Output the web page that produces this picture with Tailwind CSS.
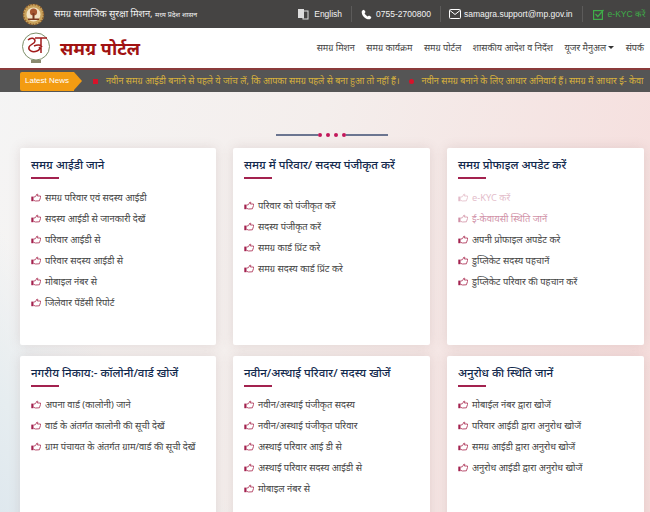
<!DOCTYPE html>
<html lang="hi">
<head>
<meta charset="UTF-8">
<title>समग्र पोर्टल</title>
<script src="https://cdn.jsdelivr.net/npm/@tailwindcss/browser@4"></script>
</head>
<body class="font-['Noto_Sans','Noto_Sans_Devanagari','Lohit_Devanagari','FreeSerif',sans-serif]">

<svg width="0" height="0" class="absolute">
  <symbol id="hand" viewBox="0 0 10 9">
    <rect x="0.300" y="3.600" width="2.200" height="4.600" fill="#a3224f"/>
    <path d="M2.500 4.200 4.500 3.600 6 1l.9.500L6.400 3h3.100v1.500L8.400 7.800 4.500 8 2.500 7.300" fill="none" stroke="#b9506f" stroke-width="1"/>
  </symbol>
</svg>

<div class="h-[512px] w-[650px] overflow-hidden bg-[linear-gradient(50deg,#dfe8ee_0%,#e6edf0_9%,transparent_22%),linear-gradient(105deg,#f5f5f5_0%,#f4eeec_45%,#f6dcdb_100%)]">

<!-- top bar -->
<div class="flex h-[28px] items-center bg-[#454443] pl-[22px] text-[#f2f2f2]">
  <svg width="23" height="23" viewBox="0 0 23 23" class="shrink-0">
    <circle cx="11.500" cy="11.500" r="10.500" fill="#c9a35c"/>
    <circle cx="11.500" cy="11.500" r="10" fill="none" stroke="#8a5a2a" stroke-width="1.500" stroke-dasharray="1.500 1.500"/>
    <circle cx="11.500" cy="11.500" r="7" fill="#f3e3c4"/>
    <circle cx="11.500" cy="9" r="3.600" fill="#a5552f"/>
    <rect x="10.500" y="10" width="2" height="6" fill="#7b3a20"/>
    <rect x="6" y="15.500" width="11" height="1.500" fill="#7b3a20"/>
  </svg>
  <div class="ml-[9px] text-[9.3px]">समग्र सामाजिक सुरक्षा मिशन, <span class="text-[7px]">मध्य प्रदेश शासन</span></div>
  <div class="ml-auto flex items-center font-['Liberation_Sans',sans-serif] text-[8.5px]">
    <div class="flex h-[16px] items-center gap-[5px] border-r border-[#5c5b5a] pr-[9px]">
      <svg width="12" height="12" viewBox="0 0 12 12"><rect x="1" y="1" width="6" height="9" fill="#ddd"/><rect x="6" y="3" width="5" height="8" fill="none" stroke="#ddd"/></svg>
      <span>English</span>
    </div>
    <div class="ml-[9px] flex h-[16px] items-center gap-[4px] border-r border-[#5c5b5a] pr-[9px]">
      <svg width="11" height="11" viewBox="0 0 24 24" fill="#fff"><path d="M6.600 1.500 10 6.500 7.800 9.500c1.300 2.800 3.700 5.200 6.700 6.700l3-2.200 5 3.400c-.4 2.800-2.500 5.100-5 5.100C9.500 22.500 1.500 14.500 1.500 6.500c0-2.500 2.300-4.600 5.100-5z"/></svg>
      <span>0755-2700800</span>
    </div>
    <div class="ml-[8px] flex h-[16px] items-center gap-[3px] border-r border-[#5c5b5a] pr-[9px]">
      <svg width="12" height="10" viewBox="0 0 12 10" fill="none" stroke="#fff"><rect x=".5" y=".5" width="11" height="9" rx="1"/><path d="m1 1.500 5 4 5-4"/></svg>
      <span>samagra.support@mp.gov.in</span>
    </div>
    <div class="ml-[10px] flex items-center gap-[4px] pr-[5px] text-[#3fae49]">
      <svg width="11" height="11" viewBox="0 0 11 11" fill="none" stroke="#3fae49" stroke-width="1.200"><rect x=".6" y="1.600" width="8.800" height="8.800"/><path d="m2.500 5 2.300 2.500L10.500 1"/></svg>
      <span>e-KYC करें</span>
    </div>
  </div>
</div>

<!-- header -->
<div class="flex h-[40px] items-center bg-white pl-[21px]">
  <svg width="30" height="32" viewBox="0 0 30 32" class="shrink-0">
    <circle cx="15" cy="14.500" r="13.500" fill="none" stroke="#7d8f6a"/>
    <path d="M7 8c3-3 7-2 7 1s-5 3-6 6 3 6 8 4c3-1 3-3 2-4M14 6h12M20 6v15M13 14c4-2 7-1 8 1" fill="none" stroke="#a11c1c" stroke-width="1.500"/>
    <rect x="10" y="28" width="10" height="3" fill="#8a8a70"/>
  </svg>
  <div class="ml-[9px] text-[18px] font-bold leading-none text-[#a11212]">समग्र पोर्टल</div>
  <nav class="ml-auto flex items-center gap-[11.5px] pr-[6px] text-[9.1px] text-[#444]">
    <span>समग्र मिशन</span>
    <span>समग्र कार्यक्रम</span>
    <span>समग्र पोर्टल</span>
    <span>शासकीय आदेश व निर्देश</span>
    <span class="flex items-center gap-[2px]">यूजर मैनुअल<span class="h-0 w-0 border-x-[3px] border-t-[3px] border-x-transparent border-t-[#333]"></span></span>
    <span>संपर्क</span>
  </nav>
</div>

<!-- latest news -->
<div class="flex h-[24px] items-center overflow-hidden whitespace-nowrap border-t-2 border-[#8a3a3a] bg-[#555] text-[9.1px] text-[#d9b23c]">
  <div class="relative ml-[20px] flex h-[19px] w-[54px] shrink-0 items-center justify-center rounded-l-[2px] bg-[#f39c12] font-['Liberation_Sans',sans-serif] text-[8px] text-white">
    Latest News
    <span class="absolute left-full top-0 h-0 w-0 border-y-[9.5px] border-l-[8px] border-y-transparent border-l-[#f39c12]"></span>
  </div>
  <span class="ml-[19px] mr-[8px] h-[5px] w-[5px] shrink-0 bg-[#d8122a]"></span>
  <span>नवीन समग्र आईडी बनाने से पहले ये जांच लें, कि आपका समग्र पहले से बना हुआ तो नहीं हैं।</span>
  <span class="ml-[10px] mr-[7px] h-[5px] w-[5px] shrink-0 rounded-full bg-[#d8122a]"></span>
  <span>नवीन समग्र बनाने के लिए आधार अनिवार्य हैं। समग्र में आधार ई- केवा</span>
</div>

<!-- divider -->
<div class="flex h-[56px] items-center justify-center pl-[14px] pt-[30px]">
  <span class="h-[2px] w-[42px] bg-[#6b7590]"></span>
  <span class="flex items-center gap-[3.500px]">
    <span class="h-[4.500px] w-[4.500px] rounded-full bg-[#c2185b]"></span>
    <span class="h-[4.500px] w-[4.500px] rounded-full bg-[#c2185b]"></span>
    <span class="h-[4.500px] w-[4.500px] rounded-full bg-[#c2185b]"></span>
    <span class="h-[4.500px] w-[4.500px] rounded-full bg-[#c2185b]"></span>
  </span>
  <span class="h-[2px] w-[42px] bg-[#6b7590]"></span>
</div>

<!-- cards -->
<div class="grid grid-cols-[196px_197px_197px] gap-x-[17px] gap-y-[11px] pl-[20px]">

  <div class="h-[197px] rounded-[2px] bg-white pl-[11px] pt-[8px] shadow-[0_0_12px_rgba(120,80,80,0.15)]">
    <h3 class="text-[11.500px] font-medium leading-[18px] text-[#12294d]">समग्र आईडी जाने</h3>
    <div class="mt-[3px] h-[2px] w-[28px] bg-[#a3224f]"></div>
    <ul class="mt-[8px] text-[9.300px] text-[#444]">
      <li class="flex h-[21px] items-center gap-[4px]"><svg width="10" height="9"><use href="#hand"/></svg>समग्र परिवार एवं सदस्य आईडी</li>
      <li class="flex h-[21px] items-center gap-[4px]"><svg width="10" height="9"><use href="#hand"/></svg>सदस्य आईडी से जानकारी देखें</li>
      <li class="flex h-[21px] items-center gap-[4px]"><svg width="10" height="9"><use href="#hand"/></svg>परिवार आईडी से</li>
      <li class="flex h-[21px] items-center gap-[4px]"><svg width="10" height="9"><use href="#hand"/></svg>परिवार सदस्य आईडी से</li>
      <li class="flex h-[21px] items-center gap-[4px]"><svg width="10" height="9"><use href="#hand"/></svg>मोबाइल नंबर से</li>
      <li class="flex h-[21px] items-center gap-[4px]"><svg width="10" height="9"><use href="#hand"/></svg>जिलेवार पेंडेंसी रिपोर्ट</li>
    </ul>
  </div>

  <div class="h-[197px] rounded-[2px] bg-white pl-[11px] pt-[8px] shadow-[0_0_12px_rgba(120,80,80,0.15)]">
    <h3 class="text-[11.500px] font-medium leading-[18px] text-[#12294d]">समग्र में परिवार/ सदस्य पंजीकृत करें</h3>
    <div class="mt-[3px] h-[2px] w-[28px] bg-[#a3224f]"></div>
    <ul class="mt-[16px] text-[9.300px] text-[#444]">
      <li class="flex h-[21px] items-center gap-[4px]"><svg width="10" height="9"><use href="#hand"/></svg>परिवार को पंजीकृत करें</li>
      <li class="flex h-[21px] items-center gap-[4px]"><svg width="10" height="9"><use href="#hand"/></svg>सदस्य पंजीकृत करें</li>
      <li class="flex h-[21px] items-center gap-[4px]"><svg width="10" height="9"><use href="#hand"/></svg>समग्र कार्ड प्रिंट करे</li>
      <li class="flex h-[21px] items-center gap-[4px]"><svg width="10" height="9"><use href="#hand"/></svg>समग्र सदस्य कार्ड प्रिंट करे</li>
    </ul>
  </div>

  <div class="h-[197px] rounded-[2px] bg-white pl-[11px] pt-[8px] shadow-[0_0_12px_rgba(120,80,80,0.15)]">
    <h3 class="text-[11.500px] font-medium leading-[18px] text-[#12294d]">समग्र प्रोफाइल अपडेट करें</h3>
    <div class="mt-[3px] h-[2px] w-[28px] bg-[#a3224f]"></div>
    <ul class="mt-[8px] text-[9.300px] text-[#444]">
      <li class="flex h-[21px] items-center gap-[4px] opacity-30"><svg width="10" height="9"><use href="#hand"/></svg><span class="text-[#a3224f]">e-KYC करें</span></li>
      <li class="flex h-[21px] items-center gap-[4px] opacity-50"><svg width="10" height="9"><use href="#hand"/></svg><span class="text-[#a3224f]">ई-केवायसी स्थिति जानें</span></li>
      <li class="flex h-[21px] items-center gap-[4px]"><svg width="10" height="9"><use href="#hand"/></svg>अपनी प्रोफाइल अपडेट करे</li>
      <li class="flex h-[21px] items-center gap-[4px]"><svg width="10" height="9"><use href="#hand"/></svg>डुप्लिकेट सदस्य पहचानें</li>
      <li class="flex h-[21px] items-center gap-[4px]"><svg width="10" height="9"><use href="#hand"/></svg>डुप्लिकेट परिवार की पहचान करें</li>
    </ul>
  </div>

  <div class="h-[197px] rounded-[2px] bg-white pl-[11px] pt-[8px] shadow-[0_0_12px_rgba(120,80,80,0.15)]">
    <h3 class="text-[11.500px] font-medium leading-[18px] text-[#12294d]">नगरीय निकाय:- कॉलोनी/वार्ड खोजें</h3>
    <div class="mt-[3px] h-[2px] w-[28px] bg-[#a3224f]"></div>
    <ul class="mt-[7px] text-[9.300px] text-[#444]">
      <li class="flex h-[21px] items-center gap-[4px]"><svg width="10" height="9"><use href="#hand"/></svg>अपना वार्ड (कालोनी) जाने</li>
      <li class="flex h-[21px] items-center gap-[4px]"><svg width="10" height="9"><use href="#hand"/></svg>वार्ड के अंतर्गत कालोनी की सूची देखें</li>
      <li class="flex h-[21px] items-center gap-[4px]"><svg width="10" height="9"><use href="#hand"/></svg>ग्राम पंचायत के अंतर्गत ग्राम/वार्ड की सूची देखें</li>
    </ul>
  </div>

  <div class="h-[197px] rounded-[2px] bg-white pl-[11px] pt-[8px] shadow-[0_0_12px_rgba(120,80,80,0.15)]">
    <h3 class="text-[11.500px] font-medium leading-[18px] text-[#12294d]">नवीन/अस्थाई परिवार/ सदस्य खोजें</h3>
    <div class="mt-[3px] h-[2px] w-[28px] bg-[#a3224f]"></div>
    <ul class="mt-[7px] text-[9.300px] text-[#444]">
      <li class="flex h-[21px] items-center gap-[4px]"><svg width="10" height="9"><use href="#hand"/></svg>नवीन/अस्थाई पंजीकृत सदस्य</li>
      <li class="flex h-[21px] items-center gap-[4px]"><svg width="10" height="9"><use href="#hand"/></svg>नवीन/अस्थाई पंजीकृत परिवार</li>
      <li class="flex h-[21px] items-center gap-[4px]"><svg width="10" height="9"><use href="#hand"/></svg>अस्थाई परिवार आई डी से</li>
      <li class="flex h-[21px] items-center gap-[4px]"><svg width="10" height="9"><use href="#hand"/></svg>अस्थाई परिवार सदस्य आईडी से</li>
      <li class="flex h-[21px] items-center gap-[4px]"><svg width="10" height="9"><use href="#hand"/></svg>मोबाइल नंबर से</li>
    </ul>
  </div>

  <div class="h-[197px] rounded-[2px] bg-white pl-[11px] pt-[8px] shadow-[0_0_12px_rgba(120,80,80,0.15)]">
    <h3 class="text-[11.500px] font-medium leading-[18px] text-[#12294d]">अनुरोध की स्थिति जानें</h3>
    <div class="mt-[3px] h-[2px] w-[28px] bg-[#a3224f]"></div>
    <ul class="mt-[7px] text-[9.300px] text-[#444]">
      <li class="flex h-[21px] items-center gap-[4px]"><svg width="10" height="9"><use href="#hand"/></svg>मोबाईल नंबर द्वारा खोजें</li>
      <li class="flex h-[21px] items-center gap-[4px]"><svg width="10" height="9"><use href="#hand"/></svg>परिवार आईडी द्वारा अनुरोध खोजें</li>
      <li class="flex h-[21px] items-center gap-[4px]"><svg width="10" height="9"><use href="#hand"/></svg>समग्र आईडी द्वारा अनुरोध खोजें</li>
      <li class="flex h-[21px] items-center gap-[4px]"><svg width="10" height="9"><use href="#hand"/></svg>अनुरोध आईडी द्वारा अनुरोध खोजें</li>
    </ul>
  </div>

</div>
</div>
</body>
</html>
